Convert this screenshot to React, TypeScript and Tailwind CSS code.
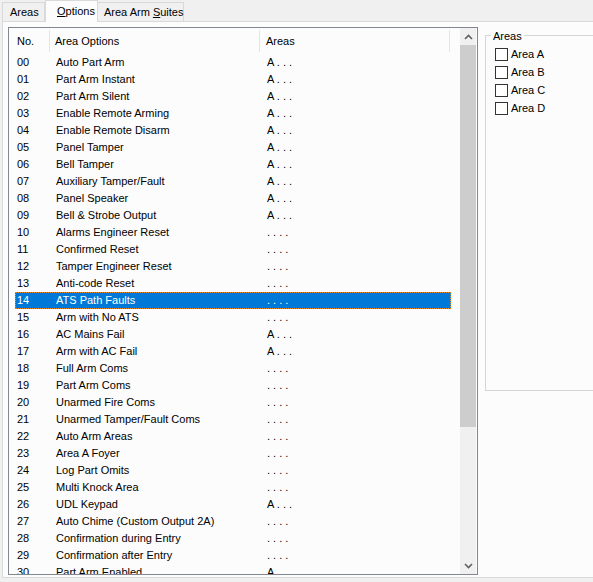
import React from "react";

const rows: [string, string, string][] = [
  ["00", "Auto Part Arm", "A . . ."],
  ["01", "Part Arm Instant", "A . . ."],
  ["02", "Part Arm Silent", "A . . ."],
  ["03", "Enable Remote Arming", "A . . ."],
  ["04", "Enable Remote Disarm", "A . . ."],
  ["05", "Panel Tamper", "A . . ."],
  ["06", "Bell Tamper", "A . . ."],
  ["07", "Auxiliary Tamper/Fault", "A . . ."],
  ["08", "Panel Speaker", "A . . ."],
  ["09", "Bell & Strobe Output", "A . . ."],
  ["10", "Alarms Engineer Reset", ". . . ."],
  ["11", "Confirmed Reset", ". . . ."],
  ["12", "Tamper Engineer Reset", ". . . ."],
  ["13", "Anti-code Reset", ". . . ."],
  ["14", "ATS Path Faults", ". . . ."],
  ["15", "Arm with No ATS", ". . . ."],
  ["16", "AC Mains Fail", "A . . ."],
  ["17", "Arm with AC Fail", "A . . ."],
  ["18", "Full Arm Coms", ". . . ."],
  ["19", "Part Arm Coms", ". . . ."],
  ["20", "Unarmed Fire Coms", ". . . ."],
  ["21", "Unarmed Tamper/Fault Coms", ". . . ."],
  ["22", "Auto Arm Areas", ". . . ."],
  ["23", "Area A Foyer", ". . . ."],
  ["24", "Log Part Omits", ". . . ."],
  ["25", "Multi Knock Area", ". . . ."],
  ["26", "UDL Keypad", "A . . ."],
  ["27", "Auto Chime (Custom Output 2A)", ". . . ."],
  ["28", "Confirmation during Entry", ". . . ."],
  ["29", "Confirmation after Entry", ". . . ."],
  ["30", "Part Arm Enabled", "A . . ."],
];

export default function App() {
  return (
    <div
      className="w-[593px] h-[582px] bg-[#f0f0f0] text-[11px] text-black overflow-hidden relative"
      style={{ fontFamily: '"Liberation Sans", Arial, sans-serif' }}
    >
      {/* Tabs */}
      <div className="flex items-end h-[21px] pl-[2px] relative z-10 whitespace-nowrap">
        <div className="h-[19px] w-[43px] shrink-0 border border-[#d9d9d9] border-b-0 bg-[#f0f0f0] flex items-center pl-[7px] leading-none">
          Areas
        </div>
        <div className="h-[22px] w-[53px] shrink-0 border border-[#d9d9d9] border-b-0 bg-[#fcfcfc] flex items-center pl-[11px] leading-none -mb-px">
          <span><span className="underline">O</span>ptions</span>
        </div>
        <div className="h-[19px] w-[86px] shrink-0 border border-[#d9d9d9] border-b-0 border-l-0 bg-[#f0f0f0] flex items-center pl-[6px] leading-none">
          <span>Area Arm <span className="underline">S</span>uites</span>
        </div>
      </div>
      {/* Panel */}
      <div className="ml-[2px] h-[557px] border border-[#d9d9d9] border-r-0 bg-[#fcfcfc] flex pt-[5px] pl-[5px]">
        {/* List box */}
        <div className="w-[470px] shrink-0 h-[548px] border border-[#828790] bg-[#fcfcfc] flex overflow-hidden">
          <div className="flex-1 flex flex-col overflow-hidden">
            {/* header */}
            <div className="h-[26px] flex shrink-0 pl-[6px]">
              <div className="w-[35px] flex items-center pl-[2px] pt-px border-r border-[#e5e5e5] my-[2px]">No.</div>
              <div className="w-[210px] flex items-center pl-[5px] pt-px border-r border-[#e5e5e5] my-[2px]">Area Options</div>
              <div className="w-[190px] flex items-center pl-[6px] pt-px border-r border-[#e5e5e5] my-[2px]">Areas</div>
            </div>
            {rows.map(([n, name, areas]) => {
              const sel = n === "14";
              return (
                <div
                  key={n}
                  className={
                    "ml-[6px] w-[436px] h-[17px] shrink-0 flex items-center " +
                    (sel
                      ? "bg-[#0078d7] text-white border border-dotted border-[#f08c28]"
                      : "border border-transparent")
                  }
                >
                  <div className="w-[35px] pl-[1px]">{n}</div>
                  <div className="w-[210px] pl-[5px]">{name}</div>
                  <div className="pl-[6px] whitespace-pre">{areas}</div>
                </div>
              );
            })}
          </div>
          {/* scrollbar */}
          <div className="w-[16px] mr-px bg-[#f0f0f0] flex flex-col">
            <div className="h-[17px] flex items-center justify-center">
              <svg width="9" height="6" viewBox="0 0 9 6">
                <path d="M1 5 L4.5 1.5 L8 5" stroke="#606060" strokeWidth="1.6" fill="none" />
              </svg>
            </div>
            <div className="h-[382px] bg-[#cdcdcd]" />
            <div className="flex-1" />
            <div className="h-[17px] flex items-center justify-center">
              <svg width="9" height="6" viewBox="0 0 9 6">
                <path d="M1 1 L4.5 4.5 L8 1" stroke="#606060" strokeWidth="1.6" fill="none" />
              </svg>
            </div>
          </div>
        </div>
        {/* Areas group */}
        <div className="ml-[7px] mt-[8px] relative w-[120px] shrink-0 h-[356px] border border-[#d5d5d5] border-r-0">
          <div className="absolute -top-[7px] left-[5px] bg-[#fcfcfc] px-[2px] leading-[14px]">Areas</div>
          <div className="pt-[9px] pl-[9px] flex flex-col">
            {["Area A", "Area B", "Area C", "Area D"].map((a) => (
              <div key={a} className="h-[18px] flex items-center gap-[3px]">
                <div className="w-[13px] h-[13px] border border-[#333333] bg-white" />
                <span className="pt-px">{a}</span>
              </div>
            ))}
          </div>
        </div>
      </div>
    </div>
  );
}
